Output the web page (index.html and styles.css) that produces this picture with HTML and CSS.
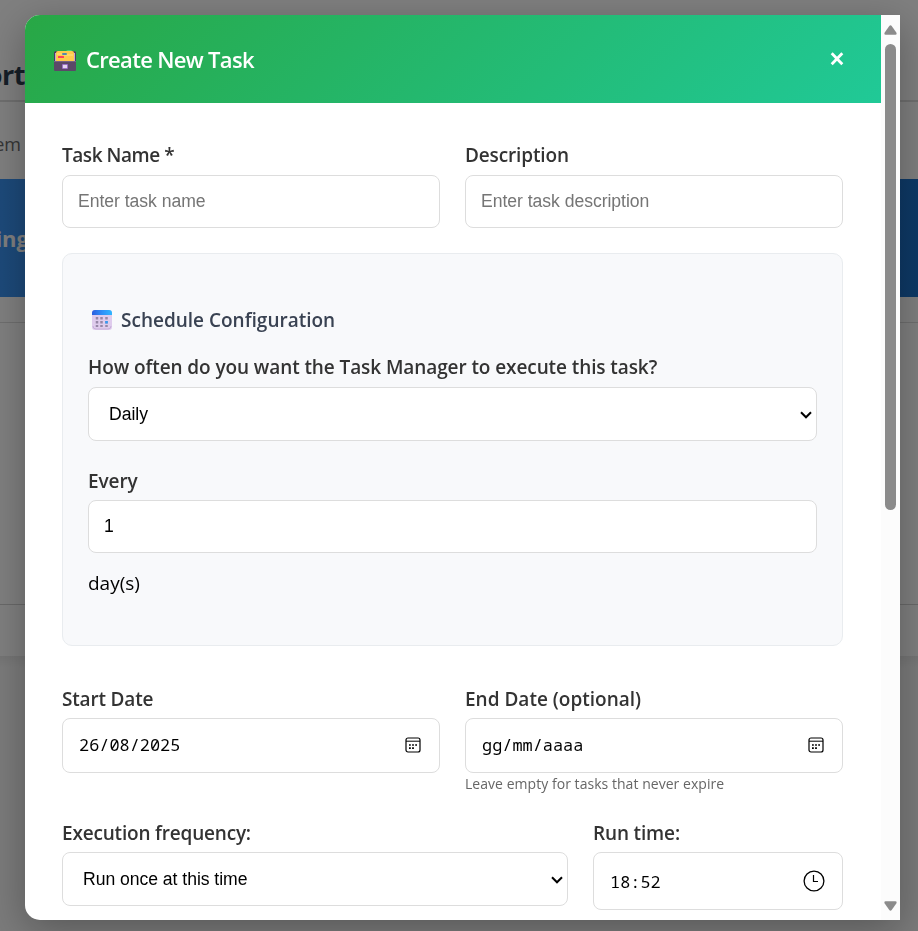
FILE: index.html
```html
<!DOCTYPE html>
<html lang="en">
<head>
<meta charset="utf-8">
<title>Create New Task</title>
<link rel="stylesheet" href="styles.css">
</head>
<body>
<main class="page">
  <div class="page-title"><span>ort</span></div>
  <div class="page-nav"><span>em</span></div>
  <div class="banner"><span>ing</span></div>
  <div class="strip"></div>
  <div class="panel"></div>
  <div class="panel-footer"></div>
  <div class="page-rest"></div>
</main>
<div class="backdrop">
  <section class="modal">
    <div class="content">
      <header class="modal-header">
        <svg class="box-icon" width="22" height="22" viewBox="0 0 22 22">
          <path d="M12 2Q12 0 14 0h3q1 0 1 2z" fill="#45cf83"/>
          <path d="M0 2l2-1h18l2 1v10H0z" fill="#4b3d5c"/>
          <rect x="1" y="3" width="1" height="8" fill="#c3a9d6"/><rect x="20" y="3" width="1" height="8" fill="#c3a9d6"/>
          <path d="M2 3q0-2 2-2h14q2 0 2 2v8H2z" fill="#ffcb4b"/>
          <path d="M3 4h5l2 1h9" fill="none" stroke="#ffe184"/>
          <rect x="8" y="3" width="5" height="2" rx="1" fill="#548bab"/>
          <rect x="4" y="6" width="6" height="2" rx=".5" fill="#ff4058"/>
          <path d="M0 11h22v9q0 1-1 1H1q-1 0-1-1z" fill="#5b4968"/>
          <path d="M0 11.5h22" stroke="#776386"/>
          <rect x="8" y="14" width="6" height="5" rx="1" fill="#9b71c5"/><rect x="9" y="15" width="4" height="3" fill="#e3d5ee"/>
        </svg>
        <h2>Create New Task</h2>
        <button class="close" aria-label="Close"><svg width="14" height="14" viewBox="0 0 14 14"><path d="M1.7 1.2l10.6 11M12.3 1.2l-10.6 11" stroke="#fff" stroke-width="2.8"/></svg></button>
      </header>
      <form class="form">
        <div class="row halves">
          <div><label class="task-name">Task Name *</label><div class="field muted">Enter task name</div></div>
          <div><label class="description">Description</label><div class="field muted">Enter task description</div></div>
        </div>
        <section class="schedule">
          <h3>
            <svg width="20" height="20" viewBox="0 0 20 20">
              <defs><linearGradient id="cal"><stop stop-color="#2d5ede"/><stop offset=".5" stop-color="#2e8ff8"/><stop offset="1" stop-color="#2fb5ff"/></linearGradient></defs>
              <rect width="20" height="20" rx="3" fill="#dfcced"/><path d="M0 5V3q0-3 3-3h14q3 0 3 3v2z" fill="url(#cal)"/>
              <path d="M1 16q0 3 3 3h12q3 0 3-3" fill="none" stroke="#c8afd9"/>
              <path d="M5 7v10M9.5 7v10M14.5 7v10" stroke="#9787a7" stroke-width="2.5" stroke-dasharray="2.5 1.5"/>
              <path d="M13.2 11h2.6v2.5h-2.6z" fill="#349bf4"/>
            </svg><span>Schedule Configuration</span></h3>
          <label class="how-often">How often do you want the Task Manager to execute this task?</label>
          <div class="field select"><span>Daily</span><svg width="12" height="8" viewBox="0 0 12 8"><path d="M1 1.3l5 5 5-5" fill="none" stroke="#000" stroke-width="2"/></svg></div>
          <label class="every">Every</label>
          <div class="field">1</div>
          <p class="unit"><span>day(s)</span></p>
        </section>
        <div class="row halves dates">
          <div><label class="start">Start Date</label>
            <div class="field date"><span>26/08/2025</span><svg width="16" height="16" viewBox="0 0 16 16"><rect x="1" y="1" width="14" height="14" rx="2" fill="none" stroke="#000" stroke-width="1.2"/><path d="M1 4.2h14" stroke="#000"/><path d="M4 8h8M4 11.2h5" stroke="#000" stroke-width="1.7" stroke-dasharray="1.8 1.3"/></svg></div></div>
          <div><label class="end">End Date (optional)</label>
            <div class="field date"><span>gg/mm/aaaa</span><svg width="16" height="16" viewBox="0 0 16 16"><rect x="1" y="1" width="14" height="14" rx="2" fill="none" stroke="#000" stroke-width="1.2"/><path d="M1 4.2h14" stroke="#000"/><path d="M4 8h8M4 11.2h5" stroke="#000" stroke-width="1.7" stroke-dasharray="1.8 1.3"/></svg></div>
            <small>Leave empty for tasks that never expire</small></div>
        </div>
        <div class="row timing">
          <div><label class="frequency">Execution frequency:</label><div class="field select"><span>Run once at this time</span><svg width="12" height="8" viewBox="0 0 12 8"><path d="M1 1.3l5 5 5-5" fill="none" stroke="#000" stroke-width="2"/></svg></div></div>
          <div><label class="run-time">Run time:</label><div class="field time"><span>18:52</span><svg width="22" height="22" viewBox="0 0 22 22"><circle cx="11" cy="11" r="9.9" fill="none" stroke="#000" stroke-width="1.3"/><path d="M10.5 5v6.5h4.5" fill="none" stroke="#000" stroke-width="1.2"/></svg></div></div>
        </div>
      </form>
    </div>
    <aside class="scrollbar">
      <svg width="13" height="10" viewBox="0 0 13 10"><path d="M5.3 1Q6.5-.5 7.7 1l4.6 6.5Q13.3 9.7 11.3 9.7H1.7Q-.3 9.7.7 7.5z" fill="#8b8b8b"/></svg>
      <div class="thumb"></div>
      <svg class="down" width="13" height="10" viewBox="0 0 13 10"><path d="M5.3 9Q6.5 10.5 7.7 9l4.6-6.5Q13.3.3 11.3.3H1.7Q-.3.3.7 2.5z" fill="#8b8b8b"/></svg>
    </aside>
  </section>
</div>
</body>
</html>
```

FILE: styles.css
```css
* { box-sizing: border-box; }
body { margin: 0; height: 931px; overflow: hidden; background: #fff; color: #333; font-family: "Open Sans", "Noto Sans", sans-serif; }
h2, h3, p { margin: 0; }
.page { display: flex; flex-direction: column; height: 931px; }
.page > div { flex: none; display: flex; }
.page span { width: 25px; display: flex; justify-content: flex-end; white-space: nowrap; }
.page-title { height: 102px; padding-top: 55px; border-bottom: 2px solid #dedede; color: #2c3e50; font-size: 27px; line-height: 40px; font-weight: 700; letter-spacing: -.5px; }
.page-nav { height: 77px; padding-top: 29px; color: #6b6b6b; font-size: 18px; line-height: 26px; }
.page .page-nav span { width: 21px; }
.banner { height: 118px; align-items: center; background: linear-gradient(90deg, #3a94f4, #1b72cc); color: #fff; font-size: 22px; font-weight: 700; }
.page .banner span { width: 29px; }
.strip { height: 26px; border-bottom: 1px solid #ddd; }
.panel { height: 282px; border-bottom: 1px solid #d2d2d2; }
.panel-footer { height: 51px; }
.page-rest { height: 275px; background: linear-gradient(#eaeaea, #f7f7f7 12px); }

.backdrop { position: fixed; inset: 0; padding: 15px 18px 11px 25px; background: rgba(0, 0, 0, .5); }
.modal { display: flex; height: 905px; overflow: hidden; background: #fff; border-radius: 15px 0 0 15px; box-shadow: 0 10px 40px rgba(0, 0, 0, .3); }
.content { width: 856px; }
.modal-header { display: flex; align-items: center; height: 88px; padding: 0 37px 0 29px; color: #fff; background: linear-gradient(135deg, #28a745, #20c997); }
.box-icon { margin: 3px 10px 0 0; }
h2 { flex: 1; font-size: 22px; line-height: 34px; font-weight: 650; letter-spacing: -.68px; white-space: nowrap; }
.close { width: 14px; height: 14px; padding: 0; border: 0; background: none; display: flex; }
.form { padding: 37px 38px 0 37px; }
.row { display: grid; }
.row > div { min-width: 0; }
.halves { grid-template-columns: 378px 378px; column-gap: 25px; }
label { display: block; height: 35px; padding-top: 2px; font-size: 19px; line-height: 26px; font-weight: 580; letter-spacing: -.09px; white-space: nowrap; }
.task-name { letter-spacing: -.45px; }
.description { letter-spacing: -.14px; }
.start { letter-spacing: -.18px; }
.end { letter-spacing: 0; }
.frequency { letter-spacing: -.19px; }
.run-time { letter-spacing: -.15px; }
.field { display: flex; align-items: center; height: 53px; padding: 0 15px 1px; border: 1px solid #ddd; border-radius: 8px; background: #fff; color: #000; font-family: "Liberation Sans", sans-serif; font-size: 17.6px; letter-spacing: -.04px; }
.muted { color: #757575; }
.schedule { height: 393px; margin-top: 25px; padding: 51px 25px 0; border: 1px solid #e9ecef; border-radius: 10px; background: #f8f9fb; }
h3 { display: flex; align-items: center; height: 30px; padding-left: 4px; gap: 9px; color: #394252; font-size: 19px; font-weight: 580; letter-spacing: 0; }
h3 svg { flex: none; }
.how-often { margin-top: 17px; }
.select { height: 54px; padding: 1px 4px 0 20px; justify-content: space-between; }
.every { height: 32px; margin-top: 27px; padding: 0; line-height: 27px; }
.unit { height: 60px; padding-top: 17px; color: #000; font-size: 19px; line-height: 26px; }
.dates { margin-top: 38px; }
.dates label, .timing label { height: 34px; }
.date { height: 55px; padding: 0 18px 1px 16px; justify-content: space-between; font: 16.9px "Noto Sans Mono", "DejaVu Sans Mono", monospace; letter-spacing: 0; }
.date span { margin-top: -1px; }
small { display: block; height: 22px; font-size: 14px; line-height: 22px; color: #666; letter-spacing: .04px; white-space: nowrap; }
.timing { grid-template-columns: 506px 250px; column-gap: 25px; margin-top: 23px; }
.time { height: 58px; padding: 0 17px 0 16px; justify-content: space-between; font: 16.9px "Noto Sans Mono", "DejaVu Sans Mono", monospace; letter-spacing: 0; }
.scrollbar { display: flex; flex-direction: column; align-items: center; width: 19px; padding: 10px 0 9px; background: #fcfcfc; }
.thumb { width: 11px; height: 466px; margin-top: 9px; border-radius: 6px; background: #8b8b8b; }
.down { margin-top: auto; }
```
